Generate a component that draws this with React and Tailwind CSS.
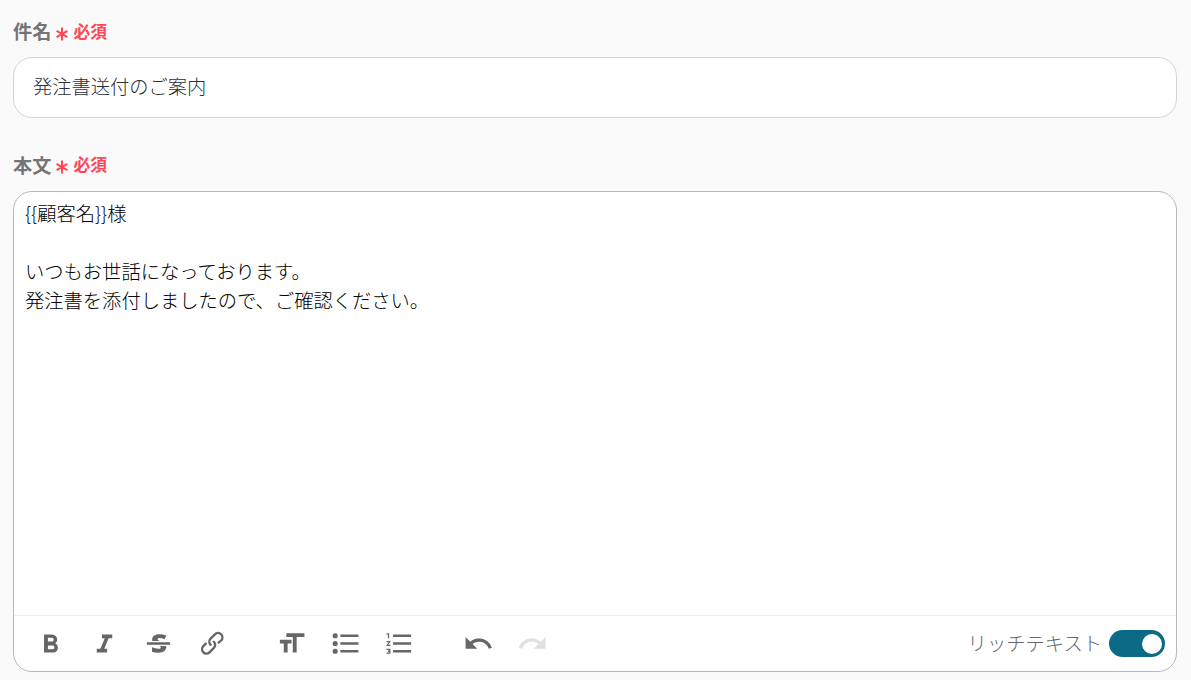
const icons = {
    bold: "M15.6 11.8c1-.7 1.6-1.8 1.6-2.8a4 4 0 0 0-4-4H7v14h7c2.1 0 3.7-1.7 3.7-3.8 0-1.5-.8-2.8-2.1-3.4zM10 7.5h3a1.5 1.5 0 1 1 0 3h-3v-3zm3.5 9H10v-3h3.5a1.5 1.5 0 1 1 0 3z",
    italic: "M10 5v3h2.2l-3.4 8H6v3h8v-3h-2.2l3.4-8H18V5h-8z",
    strike: "M12.73 14l.28.14c.26.15.45.3.57.44.12.14.18.3.18.5 0 .3-.15.56-.44.75-.3.2-.76.3-1.39.3A13.52 13.52 0 0 1 7 14.95v3.37a10.64 10.64 0 0 0 4.84.88c1.26 0 2.35-.19 3.28-.56.93-.37 1.64-.9 2.14-1.57s.74-1.45.74-2.32c0-.26-.02-.51-.06-.75h-5.21zm-5.5-4c-.08-.34-.12-.7-.12-1.1 0-1.29.52-2.3 1.58-3.02 1.05-.72 2.5-1.08 4.34-1.08 1.62 0 3.28.34 4.97 1l-1.3 2.93c-1.47-.6-2.73-.9-3.8-.9-.55 0-.96.08-1.2.26-.26.17-.38.38-.38.64 0 .27.16.52.48.74.17.12.53.3 1.05.53H7.23zM3 13h18v-2H3v2z",
    link: "M9.88 13.7a4.3 4.3 0 0 1 0-6.07l3.37-3.37a4.26 4.26 0 0 1 6.07 0 4.3 4.3 0 0 1 0 6.06l-1.96 1.72a.91.91 0 1 1-1.3-1.3l1.97-1.71a2.46 2.46 0 0 0-3.48-3.48l-3.38 3.37a2.46 2.46 0 0 0 0 3.48.91.91 0 1 1-1.3 1.3zM4.25 19.46a4.3 4.3 0 0 1 0-6.07l1.93-1.9a.91.91 0 1 1 1.3 1.3l-1.93 1.9a2.46 2.46 0 0 0 3.48 3.48l3.37-3.38c.96-.96.96-2.52 0-3.48a.91.91 0 1 1 1.3-1.3 4.3 4.3 0 0 1 0 6.07l-3.38 3.38a4.26 4.26 0 0 1-6.07 0z",
    heading: "M12 9v3H9v7H6v-7H3V9h9zM8 4h14v3h-6v12h-3V7H8V4z",
    bullets: "M4 4a2 2 0 1 0 0 4 2 2 0 0 0 0-4zm0 6a2 2 0 1 0 0 4 2 2 0 0 0 0-4zm0 6a2 2 0 1 0 0 4 2 2 0 0 0 0-4zm4 3h14v-2H8v2zm0-6h14v-2H8v2zm0-8v2h14V5H8z",
    numbers: "M2 17h2v.5H3v1h1v.5H2v1h3v-4H2v1zm1-9h1V4H2v1h1v3zm-1 3h1.8L2 13.1v.9h3v-1H3.2L5 10.9V10H2v1zm5-6v2h14V5H7zm0 14h14v-2H7v2zm0-6h14v-2H7v2z",
    undo: "M12.5 8c-2.6 0-5 1-6.9 2.6L2 7v9h9l-3.6-3.6A8 8 0 0 1 20 16l2.4-.8a10.5 10.5 0 0 0-10-7.2z",
    redo: "M18.4 10.6a10.5 10.5 0 0 0-16.9 4.6L4 16a8 8 0 0 1 12.7-3.6L13 16h9V7l-3.6 3.6z",
}

function ToolButton({ icon, label, disabled }) {
    return <button aria-label={label} disabled={disabled} className={`w-[54.2px] h-12 flex items-center justify-center ${disabled ? "text-[#e0e0e0]" : "text-[#666666]"}`}>
        <svg viewBox="0 0 24 24" className="w-[31px] h-[31px] shrink-0" fill="currentColor">
            <path d={icons[icon]} />
        </svg>
    </button>
}

function Label({ children, markClass = "mt-[5px]", badgeClass = "" }) {
    return <div className="flex items-center h-7">
        <span className="text-[19.2px] leading-7 font-bold text-[#757575]">{children}</span>
        <svg viewBox="0 0 12 14" className={`w-3 h-3.5 ml-[5px] text-[#ff4757] ${markClass}`} fill="none" stroke="currentColor" strokeWidth="2">
            <path d="M6 .5v13M.6 3.8l10.8 6.4M.6 10.2l10.8-6.4" />
        </svg>
        <span className={`ml-[5px] text-[16.8px] leading-7 font-bold text-[#ff4757] ${badgeClass}`}>必須</span>
    </div>
}

export default function App() {
    return <main className="h-[680px] bg-[#fafafa] pl-[13px] pr-3.5 pt-[17px] overflow-hidden font-['Noto_Sans_CJK_JP',sans-serif]">
        <Label>件名</Label>
        <div className="mt-3 h-[61px] flex items-center rounded-[19px] border border-[#d1d5db] bg-white px-[19px] pb-0.5 text-[19.25px] font-light text-[#2b2f36]">
            発注書送付のご案内
        </div>

        <div className="mt-[33px]">
            <Label markClass="mt-[3px]" badgeClass="mb-0.5">本文</Label>
        </div>
        <div className="mt-3 h-[481px] flex flex-col rounded-[19px] border border-[#b8b8b8] bg-white">
            <div className="flex-1 px-[11px] pt-[7px] text-[19.3px] leading-[29px] font-light text-black">
                <p>{"{{顧客名}}様"}</p>
                <p><br /></p>
                <p>いつもお世話になっております。</p>
                <p>発注書を添付しましたので、ご確認ください。</p>
            </div>
            <div className="h-14 flex items-center border-t border-[#f0f0f0] pl-[9px] pr-[11px]">
                <div className="flex">
                    <ToolButton icon="bold" label="太字" />
                    <ToolButton icon="italic" label="斜体" />
                    <ToolButton icon="strike" label="取り消し線" />
                    <ToolButton icon="link" label="リンク" />
                </div>
                <div className="flex ml-[24.7px]">
                    <ToolButton icon="heading" label="見出し" />
                    <ToolButton icon="bullets" label="箇条書き" />
                    <ToolButton icon="numbers" label="番号付きリスト" />
                </div>
                <div className="flex ml-[24.7px]">
                    <ToolButton icon="undo" label="元に戻す" />
                    <ToolButton icon="redo" label="やり直す" disabled />
                </div>
                <span className="ml-auto text-[19.3px] font-light text-[#666666]">リッチテキスト</span>
                <button role="switch" aria-checked="true" aria-label="リッチテキスト" className="ml-[7px] w-14 h-[27px] rounded-full bg-[#0b6a85] flex items-center justify-end pr-[3px]">
                    <span className="w-5 h-5 rounded-full bg-white"></span>
                </button>
            </div>
        </div>
    </main>
}
